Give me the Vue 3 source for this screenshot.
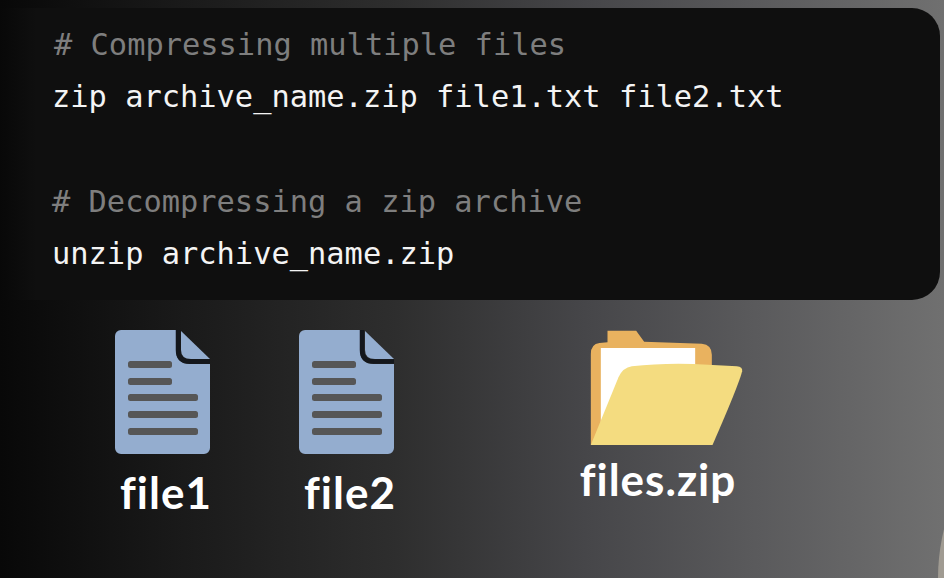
<script setup>
const docs = ['file1', 'file2']
const bars = [
  { y: 31, w: 44 },
  { y: 48, w: 44 },
  { y: 64, w: 70 },
  { y: 81, w: 70 },
  { y: 98, w: 70 }
]
</script>

<template>
  <div class="page">
    <section class="panel">
      <div class="line comment first"># Compressing multiple files</div>
      <div class="line">zip archive_name.zip file1.txt file2.txt</div>
      <div class="line">&nbsp;</div>
      <div class="line comment"># Decompressing a zip archive</div>
      <div class="line">unzip archive_name.zip</div>
    </section>

    <section class="items">
      <div v-for="d in docs" :key="d" class="doc">
        <svg class="doc-icon" viewBox="0 0 95 124" width="95" height="124">
          <path fill="#94adcf" d="M6 0H61V20Q61 34 75 34H95V118a6 6 0 0 1-6 6H6a6 6 0 0 1-6-6V6a6 6 0 0 1 6-6z" />
          <path fill="none" stroke="#14171c" stroke-width="4.5" d="M63 0V20Q63 31.500 75 31.500H95" />
          <path fill="#94adcf" d="M66 1L95 29H76Q66 29 66 20Z" />
          <rect v-for="b in bars" :key="b.y" x="13" :y="b.y" :width="b.w" height="7" rx="2.500" fill="#565656" />
        </svg>
        <div class="label doc-label">{{ d }}</div>
      </div>

      <div class="archive">
        <svg class="folder" viewBox="90 58 458 348" width="153" height="116">
          <path fill="#e9b25f" d="M92 403V130Q92 100 118 97L142 95V60H228L252 93L425 99Q455 102 455 132V403Z" />
          <path fill="#ffffff" d="M122 112H405V340H122Z" />
          <path fill="#f4dc80" d="M92 403L175 200Q188 171 215 167Q300 157 400 160L530 167Q548 168 546 182Q535 225 457 403Z" />
        </svg>
        <div class="label zip">files.zip</div>
      </div>
    </section>

    <div class="corner"></div>
  </div>
</template>

<style>
html, body {
  margin: 0;
  background: #000;
}
</style>

<style scoped>
.page {
  position: relative;
  width: 944px;
  height: 578px;
  overflow: hidden;
  box-sizing: border-box;
  padding-top: 8px;
  background: linear-gradient(90deg, #080808 0%, #161616 15%, #2e2e2e 42%, #464649 62%, #5a5a5c 80%, #707070 100%);
}
.panel {
  box-sizing: border-box;
  width: 940px;
  height: 292px;
  padding: 11px 0 0 52px;
  background: linear-gradient(90deg, #080808 0, #0f0f0f 36px);
  border-radius: 0 28px 28px 0;
  font-family: "DejaVu Sans Mono", monospace;
  font-size: 30.38px;
  line-height: 52.3px;
  color: #f4f4f4;
  white-space: pre;
}
.comment {
  color: #7e7e7e;
}
.first {
  margin-left: 2px;
}
.items {
  display: flex;
  align-items: flex-start;
  padding: 30px 0 0 115px;
}
.doc {
  display: flex;
  flex-direction: column;
  align-items: center;
  width: 95px;
  margin-right: 89px;
}
.doc-icon,
.folder {
  display: block;
}
.label {
  margin-top: 10px;
  font-family: Lato, sans-serif;
  font-weight: 700;
  font-size: 44px;
  line-height: 56px;
  letter-spacing: 1px;
  font-variant-ligatures: none;
  color: #ffffff;
  white-space: nowrap;
}
.doc-label {
  padding-left: 7px;
}
.archive {
  display: flex;
  flex-direction: column;
  align-items: center;
  width: 158px;
  margin-left: 96px;
}
.folder {
  margin-left: 16px;
}
.zip {
  margin-top: 5px;
}
.corner {
  position: absolute;
  left: 938px;
  top: 378px;
  width: 400px;
  height: 400px;
  border-radius: 50%;
  background: #a09b92;
}
</style>
